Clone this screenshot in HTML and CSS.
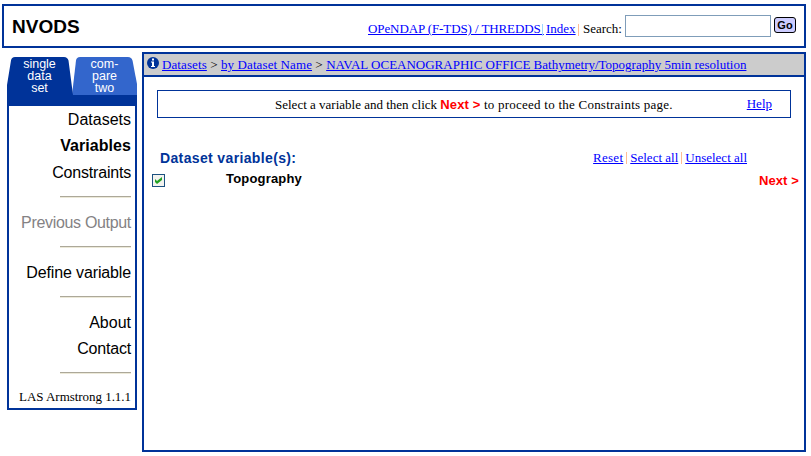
FILE: index.html
```html
<!DOCTYPE html>
<html lang="en">
<head>
<meta charset="utf-8">
<title>NVODS</title>
<link rel="stylesheet" href="styles.css">
</head>
<body>
<header class="banner">
  <h1>NVODS</h1>
  <form class="search">
    <a href="#" class="opendap">OPeNDAP (F-TDS) / THREDDS&nbsp;</a><i class="bar blue"></i><a href="#" class="index">Index</a><i class="bar"></i><label for="q">Search:</label>
    <input id="q" type="text">
    <button type="button">Go</button>
  </form>
</header>
<div class="columns">
  <nav class="sidebar">
    <div class="tabs">
      <svg class="tab-shapes" width="130" height="38" viewBox="0 0 130 38">
        <path fill="#3366cc" d="M65 38L69 3.5Q69.5 0 73 0H121Q124.500 0 125.500 3.500L130 27V38Z"/>
        <path fill="#003399" d="M0 38V28L4 3.500Q4.500 0 8 0H57Q60.500 0 61.500 3.500L66 38Z"/>
      </svg>
      <span>single<br>data<br>set</span>
      <span>com-<br>pare<br>two</span>
    </div>
    <div class="menu">
      <a class="item">Datasets</a>
      <a class="item current">Variables</a>
      <a class="item constraints">Constraints</a>
      <hr>
      <a class="item disabled">Previous Output</a>
      <hr>
      <a class="item define">Define variable</a>
      <hr>
      <a class="item">About</a>
      <a class="item contact">Contact</a>
      <hr>
      <p class="version">LAS Armstrong 1.1.1</p>
    </div>
  </nav>
  <main class="content">
    <div class="crumbs">
      <svg width="12" height="12" viewBox="0 0 12 12"><circle cx="6" cy="6" r="6" fill="#003399"/><path fill="#fff" d="M5 1.500H7V3.500H5ZM4 4.500H7V9H8V10H4V9H5V5.500H4Z"/></svg>
      <div class="trail"><span class="parents"><a href="#">Datasets</a> &gt; <a href="#">by Dataset Name</a> &gt; </span><a href="#">NAVAL OCEANOGRAPHIC OFFICE Bathymetry/Topography 5min resolution</a></div>
    </div>
    <div class="notice">
      <p>Select a variable and then click <b>Next &gt;</b><span class="after"> to proceed to the Constraints page.</span></p>
      <a href="#">Help</a>
    </div>
    <div class="heading">
      <h2>Dataset variable(s):</h2>
      <div class="actions"><a href="#" class="reset">Reset</a><i class="bar"></i><a href="#">Select all</a><i class="bar"></i><a href="#">Unselect all</a></div>
    </div>
    <div class="variable">
      <span class="check"><svg width="11" height="11" viewBox="0 0 11 11"><path fill="#21a121" d="M2 4L4 6L9 2V5L4 9L2 7Z"/></svg></span>
      <strong>Topography</strong>
      <b class="next">Next &gt;</b>
    </div>
  </main>
</div>
</body>
</html>
```

FILE: styles.css
```css
* { box-sizing: border-box; }
body { margin: 0; padding: 4px 5px 4px 2px; width: 811px; height: 456px; background: #fff; color: #000; font: 13px/16px "Liberation Serif", serif; overflow: hidden; }
a { white-space: nowrap; }
a[href] { color: #0000ff; text-decoration: underline; }
h1, h2, p { margin: 0; }
.banner { display: flex; justify-content: space-between; width: 804px; height: 44px; border: 2px solid #003399; padding: 0 8px; }
h1 { margin-top: 9px; font: bold 19px/24px "Liberation Sans", sans-serif; }
.search { display: flex; align-items: flex-start; margin-top: 9px; }
.search a, .search label { margin-top: 6px; }
.opendap { width: 173px; letter-spacing: -0.1px; }
.index { width: 30px; }
.bar { flex: none; width: 1px; height: 12px; margin: 9px 3px 0 2px; background: #ffbd94; }
.bar.blue { background: #9cd6ff; margin-left: 1px; margin-right: 3px; }
.search label { width: 39px; margin-left: 1px; }
.search input { width: 146px; height: 22px; margin-left: 3px; padding: 0; border: 1px solid #7f9db9; }
.search button { width: 22px; height: 16px; margin: 2px 0 0 3px; padding: 0; border: 1px solid #000; border-radius: 3px; background: #ccccff; color: #000; font: bold 11px/13px "Liberation Sans", sans-serif; }
.columns { display: flex; align-items: flex-start; gap: 5px; margin-top: 4px; padding-left: 5px; }
.sidebar { width: 130px; margin-top: 5px; }
.tabs { position: relative; display: flex; height: 49px; background: linear-gradient(#fff 0 38px, #003399 38px); color: #fff; font: 12.500px/12px "Liberation Sans", sans-serif; text-align: center; }
.tab-shapes { position: absolute; left: 0; top: 0; }
.tabs span { position: relative; width: 65px; padding-top: 1px; }
.menu { height: 304px; padding: 1px 4px 0; border: 2px solid #003399; border-top: 0; text-align: right; }
.item { display: block; height: 26px; font: 16px/26px "Liberation Sans", sans-serif; }
.current { font-weight: bold; letter-spacing: 0.05px; }
.constraints { height: 27px; line-height: 28px; letter-spacing: -0.2px; }
.disabled { color: #848284; letter-spacing: -0.32px; }
.define { letter-spacing: -0.14px; }
.contact { letter-spacing: -0.2px; }
hr { width: 71px; height: 2px; margin: 10px 0 12px auto; border: 0; border-top: 1px solid #aca899; border-bottom: 1px solid #ece9d8; }
.version { padding-top: 3px; letter-spacing: -0.04px; }
.content { width: 664px; height: 400px; border: 2px solid #003399; }
.crumbs { display: flex; height: 23px; padding: 3px 0 0 3px; background: #ccc; border-bottom: 2px solid #003399; }
.trail { margin-left: 3px; white-space: nowrap; }
.parents { letter-spacing: 0.1px; }
.notice { display: flex; justify-content: space-between; width: 634px; height: 28px; margin: 13px 0 0 13px; padding: 5px 18px 0 117px; border: 1px solid #003399; }
.notice p { padding-top: 1px; }
.notice b, .next { color: #f00; font: bold 13px/16px "Liberation Sans", sans-serif; letter-spacing: 0.12px; }
.after { letter-spacing: 0.24px; }
.heading { display: flex; justify-content: space-between; margin-top: 32px; padding: 0 57px 0 16px; }
h2 { color: #003399; font: bold 14px/16px "Liberation Sans", sans-serif; letter-spacing: 0.36px; }
.actions { display: flex; }
.reset { letter-spacing: 0.25px; }
.actions .bar { margin: 2px 3px 0 3px; }
.variable { display: flex; margin-top: 4px; padding: 0 5px 0 8px; }
.check { flex: none; width: 13px; height: 13px; margin-top: 4px; border: 1px solid #1c5180; background: #f3f3ef; }
.check svg { display: block; }
.variable strong { margin: 1px 0 0 61px; font: bold 13px/16px "Liberation Sans", sans-serif; letter-spacing: 0.18px; }
.next { margin: 3px 0 0 auto; }
```
